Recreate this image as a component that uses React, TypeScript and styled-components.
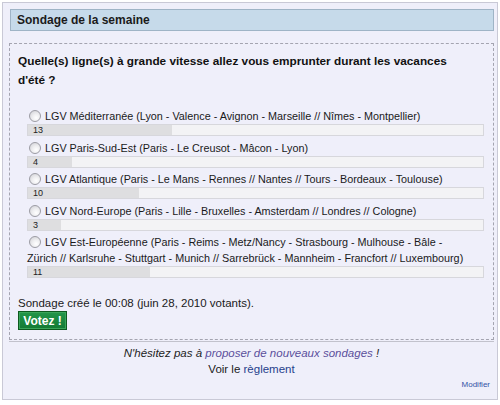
import React from "react";
import styled, { createGlobalStyle } from "styled-components";

const Global = createGlobalStyle`
  html, body { margin: 0; padding: 0; background: #ffffff; }
  body { font-family: "Liberation Sans", Arial, sans-serif; color: #111; }
`;

const Page = styled.div`
  padding: 2px;
  width: 500px;
  box-sizing: border-box;
`;

const Panel = styled.div`
  box-sizing: border-box;
  width: 496px;
  height: 398px;
  border: 1px solid #c9c9d6;
  background: #efeffa;
  padding: 6px 4px 0 7px;
  display: flex;
  flex-direction: column;
`;

const Header = styled.div`
  box-sizing: border-box;
  width: 484px;
  height: 22px;
  background: #c6daea;
  border: 1px solid #9fb4c6;
  padding: 0 6px;
  font-size: 12px;
  font-weight: bold;
  line-height: 20px;
  color: #1b1b1b;
`;

const PollBox = styled.div`
  box-sizing: border-box;
  margin-top: 12px;
  margin-left: -1px;
  width: 485px;
  border: 1px dashed #a4a4b0;
  padding: 8px 8px 9px 8px;
`;

const Question = styled.div`
  font-size: 11.8px;
  font-weight: bold;
  line-height: 19px;
  color: #111;
  padding-right: 30px;
`;

const OptionList = styled.div`
  margin: 16px 0 0 9px;
  width: 457px;
  display: flex;
  flex-direction: column;
  gap: 1.5px;
`;

const OptionLabel = styled.label`
  display: block;
  font-size: 10.8px;
  line-height: 16px;
  padding: 2px 20px 0 0;
  color: #1a1a1a;
`;

const Radio = styled.input.attrs({ type: "radio" })`
  appearance: none;
  -webkit-appearance: none;
  box-sizing: border-box;
  width: 12px;
  height: 12px;
  margin: 0 4px 0 2px;
  vertical-align: -2px;
  border: 1px solid #9c9ca4;
  border-radius: 50%;
  background: radial-gradient(circle at 62% 68%, #ffffff 0%, #efeff1 40%, #cdcdd2 100%);
`;

const Bar = styled.div`
  box-sizing: border-box;
  position: relative;
  height: 12px;
  border: 1px solid #d7d7dc;
  background: #f3f3f5;
  overflow: hidden;
`;

const BarFill = styled.div`
  height: 100%;
  background: #dedee0;
`;

const BarValue = styled.span`
  position: absolute;
  left: 5px;
  top: 0;
  font-size: 9px;
  line-height: 10px;
  color: #222;
`;

const Created = styled.div`
  margin-top: 17px;
  font-size: 11.5px;
  line-height: 16px;
  color: #1a1a1a;
`;

const VoteButton = styled.button`
  box-sizing: border-box;
  margin-top: 0;
  width: 49px;
  height: 19px;
  padding: 0;
  border: 1px solid #0d5a1f;
  box-shadow: inset 0 0 0 1px #3aa55a;
  background: linear-gradient(#23964a, #127a34);
  color: #ffffff;
  font-family: "Liberation Sans", Arial, sans-serif;
  font-size: 12px;
  font-weight: bold;
  line-height: 16px;
  display: block;
`;

const Rule = styled.div`
  margin-left: -1px;
  width: 485px;
  height: 1px;
  background: #c2c2cc;
  margin-top: 1px;
`;

const Note = styled.div`
  margin-top: 3px;
  text-align: center;
  font-size: 11.5px;
  font-style: italic;
  line-height: 16px;
  color: #222;
`;

const Line = styled.div`
  text-align: center;
  font-size: 11.5px;
  line-height: 16px;
  color: #1a1a1a;
`;

const Link = styled.a<{ $visited?: boolean }>`
  color: ${(p) => (p.$visited ? "#5b4f9c" : "#263f8c")};
  text-decoration: none;
`;

const Edit = styled.div`
  text-align: right;
  padding-right: 3px;
  font-size: 8px;
  line-height: 16px;
  color: #3452a6;
`;

const options = [
  { label: "LGV Méditerranée (Lyon - Valence - Avignon - Marseille // Nîmes - Montpellier)", votes: 13 },
  { label: "LGV Paris-Sud-Est (Paris - Le Creusot - Mâcon - Lyon)", votes: 4 },
  { label: "LGV Atlantique (Paris - Le Mans - Rennes // Nantes // Tours - Bordeaux - Toulouse)", votes: 10 },
  { label: "LGV Nord-Europe (Paris - Lille - Bruxelles - Amsterdam // Londres // Cologne)", votes: 3 },
  {
    label:
      "LGV Est-Européenne (Paris - Reims - Metz/Nancy - Strasbourg - Mulhouse - Bâle - Zürich // Karlsruhe - Stuttgart - Munich // Sarrebrück - Mannheim - Francfort // Luxembourg)",
    votes: 11,
  },
];

const total = options.reduce((s, o) => s + o.votes, 0);

export default function App() {
  return (
    <Page>
      <Global />
      <Panel>
        <Header>Sondage de la semaine</Header>
        <PollBox>
          <Question>
            Quelle(s) ligne(s) à grande vitesse allez vous emprunter durant les vacances d'été ?
          </Question>
          <OptionList>
            {options.map((o, i) => (
              <div key={i}>
                <OptionLabel>
                  <Radio name="poll" />
                  {o.label}
                </OptionLabel>
                <Bar>
                  <BarFill style={{ width: `${(o.votes / total) * 100}%` }} />
                  <BarValue>{o.votes}</BarValue>
                </Bar>
              </div>
            ))}
          </OptionList>
          <Created>Sondage créé le 00:08 (juin 28, 2010 votants).</Created>
          <VoteButton>Votez !</VoteButton>
        </PollBox>
        <Rule />
        <Note>
          N'hésitez pas à <Link $visited href="#">proposer de nouveaux sondages</Link> !
        </Note>
        <Line>
          Voir le <Link href="#">règlement</Link>
        </Line>
        <Edit>Modifier</Edit>
      </Panel>
    </Page>
  );
}
